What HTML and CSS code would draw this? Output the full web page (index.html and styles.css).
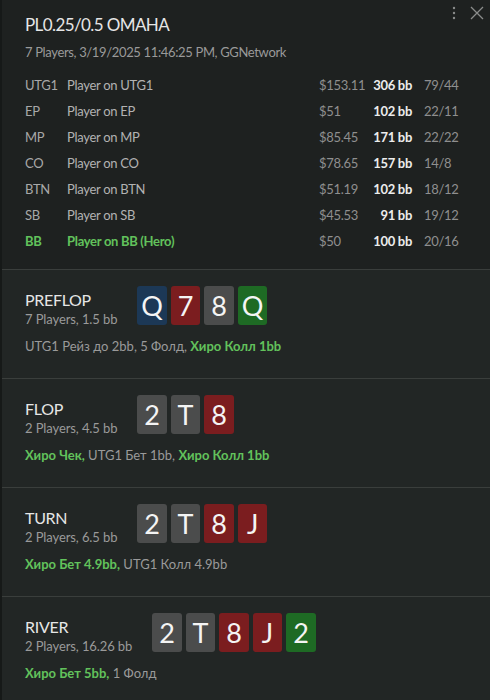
FILE: index.html
```html
<!DOCTYPE html>
<html lang="ru">
<head>
<meta charset="utf-8">
<title>Hand</title>
<link rel="stylesheet" href="styles.css">
</head>
<body>
<div class="panel">
  <header class="head">
    <div class="tools">
      <svg class="kebab" width="4" height="14" viewBox="0 0 4 14"><circle cx="2" cy="2" r="1.2"/><circle cx="2" cy="7" r="1.2"/><circle cx="2" cy="12" r="1.2"/></svg>
      <svg class="close" width="14" height="14" viewBox="0 0 14 14"><path d="M1 1 L13 13 M13 1 L1 13"/></svg>
    </div>
    <h1 class="title">PL0.25/0.5 OMAHA</h1>
    <div class="meta">7 Players, 3/19/2025 11:46:25 PM, GGNetwork</div>
    <div class="players">
      <div class="prow"><span class="pos">UTG1</span><span class="name">Player on UTG1</span><span class="money">$153.11</span><span class="bb">306 bb</span><span class="stat">79/44</span></div>
      <div class="prow"><span class="pos">EP</span><span class="name">Player on EP</span><span class="money">$51</span><span class="bb">102 bb</span><span class="stat">22/11</span></div>
      <div class="prow"><span class="pos">MP</span><span class="name">Player on MP</span><span class="money">$85.45</span><span class="bb">171 bb</span><span class="stat">22/22</span></div>
      <div class="prow"><span class="pos">CO</span><span class="name">Player on CO</span><span class="money">$78.65</span><span class="bb">157 bb</span><span class="stat">14/8</span></div>
      <div class="prow"><span class="pos">BTN</span><span class="name">Player on BTN</span><span class="money">$51.19</span><span class="bb">102 bb</span><span class="stat">18/12</span></div>
      <div class="prow"><span class="pos">SB</span><span class="name">Player on SB</span><span class="money">$45.53</span><span class="bb">91 bb</span><span class="stat">19/12</span></div>
      <div class="prow hero"><span class="pos">BB</span><span class="name">Player on BB (Hero)</span><span class="money">$50</span><span class="bb">100 bb</span><span class="stat">20/16</span></div>
    </div>
  </header>

  <section class="street">
    <div class="srow">
      <div class="sinfo"><div class="sname">PREFLOP</div><div class="ssub">7 Players, 1.5 bb</div></div>
      <div class="cards"><span class="card blue">Q</span><span class="card red">7</span><span class="card grey">8</span><span class="card green">Q</span></div>
    </div>
    <div class="actions">UTG1 Рейз до 2bb, 5 Фолд, <b>Хиро Колл 1bb</b></div>
  </section>

  <section class="street">
    <div class="srow">
      <div class="sinfo"><div class="sname">FLOP</div><div class="ssub">2 Players, 4.5 bb</div></div>
      <div class="cards"><span class="card grey">2</span><span class="card grey">T</span><span class="card red">8</span></div>
    </div>
    <div class="actions"><b>Хиро Чек,</b> UTG1 Бет 1bb, <b>Хиро Колл 1bb</b></div>
  </section>

  <section class="street">
    <div class="srow">
      <div class="sinfo"><div class="sname">TURN</div><div class="ssub">2 Players, 6.5 bb</div></div>
      <div class="cards"><span class="card grey">2</span><span class="card grey">T</span><span class="card red">8</span><span class="card red">J</span></div>
    </div>
    <div class="actions"><b>Хиро Бет 4.9bb,</b> UTG1 Колл 4.9bb</div>
  </section>

  <section class="street">
    <div class="srow">
      <div class="sinfo"><div class="sname">RIVER</div><div class="ssub">2 Players, 16.26 bb</div></div>
      <div class="cards"><span class="card grey">2</span><span class="card grey">T</span><span class="card red">8</span><span class="card red">J</span><span class="card green">2</span></div>
    </div>
    <div class="actions"><b>Хиро Бет 5bb,</b> 1 Фолд</div>
  </section>
</div>
</body>
</html>
```

FILE: styles.css
```css
* { box-sizing: border-box; }
html, body {
  margin: 0;
  padding: 0;
  width: 490px;
  height: 700px;
  overflow: hidden;
  background: #161918;
}
body {
  font-family: "Lato", "Liberation Sans", sans-serif;
  color: #b0b0b0;
}
.panel {
  margin-left: 2px;
  height: 700px;
  background: #222625;
}
.head {
  position: relative;
  background: #1e2120;
  padding: 13px 12px 15px 23px;
  border-bottom: 1px solid #3a3e3c;
}
.tools {
  position: absolute;
  top: 6px;
  right: 6px;
  display: flex;
  align-items: center;
  gap: 14px;
}
.kebab circle { fill: #8a8c8b; }
.close path { stroke: #8a8c8b; stroke-width: 1.3; fill: none; }
.title {
  margin: 0;
  font-size: 17px;
  letter-spacing: -0.6px;
  line-height: 24px;
  font-weight: 400;
  color: #e6e6e6;
}
.meta {
  margin-top: 6px;
  font-size: 13px;
  letter-spacing: -0.35px;
  line-height: 18px;
  color: #9a9a9a;
}
.players {
  margin-top: 11px;
}
.prow {
  display: grid;
  grid-template-columns: 42px 1fr 51px 42px 66px;
  height: 26px;
  align-items: center;
  font-size: 13px;
  letter-spacing: -0.3px;
  white-space: nowrap;
}
.pos { color: #a8a8a8; }
.name { color: #b2b2b2; }
.money { color: #8f8f8f; }
.bb { color: #ececec; font-weight: 700; text-align: right; }
.stat { color: #8f8f8f; padding-left: 12px; }
.prow.hero .pos, .prow.hero .name { color: #62c25c; font-weight: 700; }

.street {
  padding: 16px 12px 23px 23px;
  border-bottom: 1px solid #3a3e3c;
  height: 109px;
}
.srow {
  display: flex;
  align-items: flex-start;
  gap: 20px;
  height: 39px;
}
.sinfo {
  padding-top: 3px;
}
.sname {
  font-size: 16px;
  letter-spacing: -0.3px;
  line-height: 21px;
  color: #e6e6e6;
}
.ssub {
  font-size: 13px;
  letter-spacing: -0.1px;
  line-height: 18px;
  color: #9a9a9a;
}
.cards {
  display: flex;
  gap: 4px;
}
.card {
  width: 29.5px;
  height: 39px;
  border-radius: 3px;
  display: flex;
  align-items: center;
  justify-content: center;
  font-size: 27px;
  color: #f4f4f4;
  padding-bottom: 1px;
}
.blue { background: #1c3856; }
.red { background: #7b1d1f; }
.grey { background: #4b4c4c; }
.green { background: #1e6a24; }
.actions {
  margin-top: 12px;
  font-size: 13px;
  line-height: 18px;
  color: #9a9a9a;
}
.actions b { color: #62c25c; font-weight: 700; }
```
